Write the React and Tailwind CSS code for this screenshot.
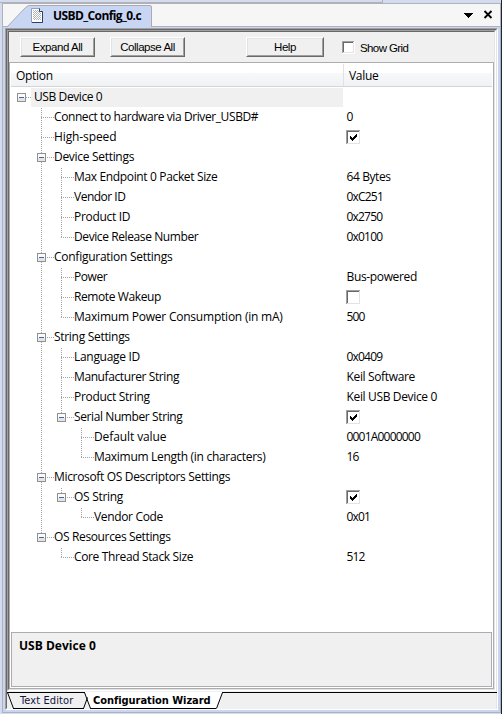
import React from "react";

const HEX = "tracking-[-0.8px]";

// label, depth, value, label tracking, value tracking, expandable
const rows = [
  ["Connect to hardware via Driver_USBD#", 1, "0", "tracking-[-0.41px]", HEX],
  ["High-speed", 1, true, "tracking-[-0.1px]"],
  ["Device Settings", 1, null, "tracking-[-0.3px]", "", true],
  ["Max Endpoint 0 Packet Size", 2, "64 Bytes", "tracking-[-0.35px]", "tracking-[-0.4px]"],
  ["Vendor ID", 2, "0xC251", "tracking-[-0.5px]", HEX],
  ["Product ID", 2, "0x2750", "tracking-[-0.3px]", HEX],
  ["Device Release Number", 2, "0x0100", "tracking-[-0.4px]", HEX],
  ["Configuration Settings", 1, null, "tracking-[-0.26px]", "", true],
  ["Power", 2, "Bus-powered", "tracking-[-0.45px]", "tracking-[-0.35px]"],
  ["Remote Wakeup", 2, false, "tracking-[-0.4px]"],
  ["Maximum Power Consumption (in mA)", 2, "500", "tracking-[-0.22px]", HEX],
  ["String Settings", 1, null, "tracking-[-0.3px]", "", true],
  ["Language ID", 2, "0x0409", "tracking-[-0.3px]", HEX],
  ["Manufacturer String", 2, "Keil Software", "tracking-[-0.4px]", "tracking-[-0.35px]"],
  ["Product String", 2, "Keil USB Device 0", "tracking-[-0.3px]", "tracking-[-0.35px]"],
  ["Serial Number String", 2, true, "tracking-[-0.4px]", "", true],
  ["Default value", 3, "0001A0000000", "tracking-[-0.1px]", HEX],
  ["Maximum Length (in characters)", 3, "16", "tracking-[-0.3px]", HEX],
  ["Microsoft OS Descriptors Settings", 1, null, "tracking-[-0.33px]", "", true],
  ["OS String", 2, true, "tracking-[-0.3px]", "", true],
  ["Vendor Code", 3, "0x01", "tracking-[-0.34px]", HEX],
  ["OS Resources Settings", 1, null, "tracking-[-0.36px]", "", true],
  ["Core Thread Stack Size", 2, "512", "tracking-[-0.36px]", HEX],
];

function Minus() {
  return (
    <svg width="9" height="9" shapeRendering="crispEdges" className="mb-px block shrink-0">
      <rect width="9" height="9" fill="#919191" />
      <rect x="1" y="1" width="7" height="7" fill="#fafafa" />
      <rect x="1" y="5" width="7" height="3" fill="#e4e4e4" />
      <rect x="2" y="4" width="5" height="1" fill="#4b63a7" />
    </svg>
  );
}

function Check({ on, size = 15 }) {
  const s = size;
  return (
    <svg width={s} height={s} shapeRendering="crispEdges" className="block shrink-0">
      <rect width={s} height={s} fill="#fff" />
      <rect x="1" y="1" width={s - 2} height={s - 2} fill="#e3e3e3" />
      <path d={`M0 0h${s - 1}v1H1v${s - 2}H0z`} fill="#a0a0a0" />
      <path d={`M1 1h${s - 3}v1H2v${s - 4}H1z`} fill="#696969" />
      <rect x="2" y="2" width={s - 4} height={s - 4} fill="#fff" />
      {on && <path d="M4 6h1v1h1v1h1v-1h1v-1h1v-1h1v-1h1v3h-1v1h-1v1h-1v1h-1v1h-1v-1h-1v-1h-1z" fill="#000" />}
    </svg>
  );
}

function Row({ row, index }) {
  const [label, depth, value, track, valueTrack, open] = row;
  const guides = [];
  for (let d = 1; d <= depth; d++) {
    let more = false;
    for (let j = index + 1; j < rows.length; j++) {
      if (rows[j][1] < d) break;
      if (rows[j][1] === d) {
        more = true;
        break;
      }
    }
    guides.push({ x: d * 20 + 11, h: more ? 20 : d === depth ? 10 : 0 });
  }
  return (
    <div className="relative flex h-5 shrink-0 items-center">
      <svg width="90" height="20" className="absolute left-0 top-0" shapeRendering="crispEdges">
        {guides.map(
          (g) =>
            g.h > 0 && (
              <path key={g.x} d={`M${g.x + 0.5} 0V${g.h}`} stroke="#a4a4a4" strokeDasharray="1 1" />
            )
        )}
        <path d={`M${depth * 20 + 11} 9.5h13`} stroke="#a4a4a4" strokeDasharray="1 1" />
      </svg>
      <div className="relative flex w-[336px] shrink-0 items-center">
        <div style={{ width: depth * 20 + 7 }} className="shrink-0" />
        <div className="flex w-[17px] shrink-0 items-center">{open && <Minus />}</div>
        <span className={`mb-[2px] whitespace-pre ${track}`}>{label}</span>
      </div>
      {typeof value === "boolean" ? (
        <div className="pb-px">
          <Check on={value} />
        </div>
      ) : (
        <span className={`mb-[2px] pl-[0.5px] ${valueTrack}`}>{value}</span>
      )}
    </div>
  );
}

function Btn({ children, className }) {
  return (
    <div className={`h-5 shrink-0 border border-b-[#696969] border-r-[#696969] border-l-white border-t-white ${className}`}>
      <div className="flex h-full items-center justify-center border border-b-[#a0a0a0] border-r-[#a0a0a0] border-l-[#e3e3e3] border-t-[#e3e3e3] bg-[#f0f0f0] font-['Liberation_Sans',sans-serif] text-[11.5px] tracking-[-0.45px]">
        {children}
      </div>
    </div>
  );
}

function SheetTabs() {
  return (
    <div className="relative flex h-[17px] shrink-0 items-center bg-[#f0f0f0] font-['DejaVu_Sans_Condensed','DejaVu_Sans',sans-serif] text-[11px]">
      <svg width="490" height="17" className="absolute left-0 top-0">
        <path d="M77 0L83 16.500H209L215 0z" fill="#fff" />
        <path d="M0 0.500H78M215 0.500H490M6 16.500H77M83 16.500H209" stroke="#000" shapeRendering="crispEdges" />
        <path d="M.5.5L6.500 16.500M76.500 16.500L80.500 5.500M77.500.5L83.500 16.500M209.500 16.500L215.500.5" stroke="#000" fill="none" />
      </svg>
      <span className="relative ml-[13px] mt-px w-[73px] tracking-[0.1px] text-[#14143c]">Text Editor</span>
      <b className="relative mt-px whitespace-nowrap tracking-[-0.05px]">Configuration Wizard</b>
    </div>
  );
}

export default function App() {
  return (
    <div className="flex h-[714px] w-[502px] overflow-hidden bg-[#d3dcef] font-['Open_Sans',sans-serif] text-[12px] leading-4 text-black">
      <div className="flex w-[501px] shrink-0 flex-col">
        <div className="h-[3px] w-[383px] shrink-0 border-b border-r border-[#b0b2b8]" />
        <div className="ml-[2px] flex h-[710px] w-[499px] shrink-0 flex-col border border-[#b0b2b8] bg-[#c8d6f4]">
          <div className="relative flex h-[23px] shrink-0 items-center border-b border-[#b0b2b8] bg-[#f6f6f6]">
            <svg width="152" height="23" className="absolute left-0 top-0">
              <path d="M4 23L22.500 3.500Q24.500 1.500 27 1.500H147Q148.500 1.500 148.500 3V23" fill="#c8d6f4" stroke="#a9abb0" />
              <g transform="translate(28 4)">
                <path d="M.5.5h8l3 3v11H.5z" fill="#fff" stroke="#8fa0bc" />
                <path d="M2 2.500h6M3 3.500h5M2 4.500h7M3 5.500h7M2 6.500h8M3 7.500h7M2 8.500h8M3 9.500h7M2 10.500h8M3 11.500h7" stroke="#b4b4b4" strokeDasharray="1 1" shapeRendering="crispEdges" />
                <path d="M8.500.5v3h3" fill="#e8eef8" stroke="#244365" />
                <path d="M11.500 3.500v11H1" fill="none" stroke="#244365" />
              </g>
            </svg>
            <b className="relative ml-[50px] mt-[2px] tracking-[-0.6px]">USBD_Config_0.c</b>
            <svg width="30" height="10" className="absolute right-[7px] top-[6px]">
              <path d="M1 3h9v1H9v1H8v1H7v1H6v1H5V7H4V6H3V5H2V4H1z" shapeRendering="crispEdges" />
              <path d="M21.500 1l7 7M28.500 1l-7 7" stroke="#000" strokeWidth="1.800" />
            </svg>
          </div>
          <div className="ml-[2px] mt-px flex h-[682px] w-[493px] shrink-0 flex-col border border-b-white border-l-[#a0a0a0] border-r-white border-t-[#a0a0a0]">
            <div className="flex h-full flex-col border border-b-[#e3e3e3] border-l-[#696969] border-r-[#e3e3e3] border-t-[#696969]">
              <div className="flex h-[661px] shrink-0 flex-col border border-b-white border-l-[#a0a0a0] border-r-white border-t-[#a0a0a0]">
                <div className="flex h-full flex-col border border-b-[#e3e3e3] border-l-[#696969] border-r-[#e3e3e3] border-t-[#696969]">
                  <div className="flex h-[30px] shrink-0 bg-[#f0f0f0] pl-[11px] pt-[5px]">
                    <Btn className="w-[75px]">Expand All</Btn>
                    <Btn className="ml-[15px] w-[75px]">Collapse All</Btn>
                    <Btn className="ml-[61px] w-[78px]">Help</Btn>
                    <div className="ml-[18px] mt-[4px]">
                      <Check size={13} />
                    </div>
                    <span className="ml-[5px] mt-[3px] font-['Liberation_Sans',sans-serif] text-[11.5px] tracking-[-0.6px]">Show Grid</span>
                  </div>
                  <div className="flex h-[627px] shrink-0 flex-col border border-[#abadb3] bg-white">
                    <div className="mx-px flex h-[24px] shrink-0 border-b border-[#d5d5d5] bg-[linear-gradient(#fff_0%,#fff_42%,#f7f8fa_43%,#f1f2f4_100%)] pt-[5px] tracking-[-0.3px]">
                      <span className="w-[332px] pl-[5px]">Option</span>
                      <span className="-mt-[4px] border-l border-[#e0e2e6] pl-[5px] pt-[4px]">Value</span>
                    </div>
                    <div className="mt-px flex h-5 shrink-0 items-center">
                      <span className="ml-[7px]">
                        <Minus />
                      </span>
                      <span className="mb-[2px] w-[5px] border-t border-dotted border-[#a4a4a4]" />
                      <span className="h-[19px] w-[312px] self-start bg-[#f0f0f0] pl-[3px] pt-px tracking-[-0.4px]">USB Device 0</span>
                    </div>
                    {rows.map((r, i) => (
                      <Row key={r[0]} row={r} index={i} />
                    ))}
                    <div className="mx-px mb-px mt-auto h-[55px] shrink-0 border border-[#abadb3] bg-[#f0f0f0] pl-[7px] pt-[5px] font-bold tracking-[0.02px]">
                      USB Device 0
                    </div>
                  </div>
                </div>
              </div>
              <div className="h-px shrink-0 bg-[#f0f0f0]" />
              <SheetTabs />
            </div>
          </div>
        </div>
      </div>
      <div className="w-px bg-[#1b2438]" />
    </div>
  );
}
